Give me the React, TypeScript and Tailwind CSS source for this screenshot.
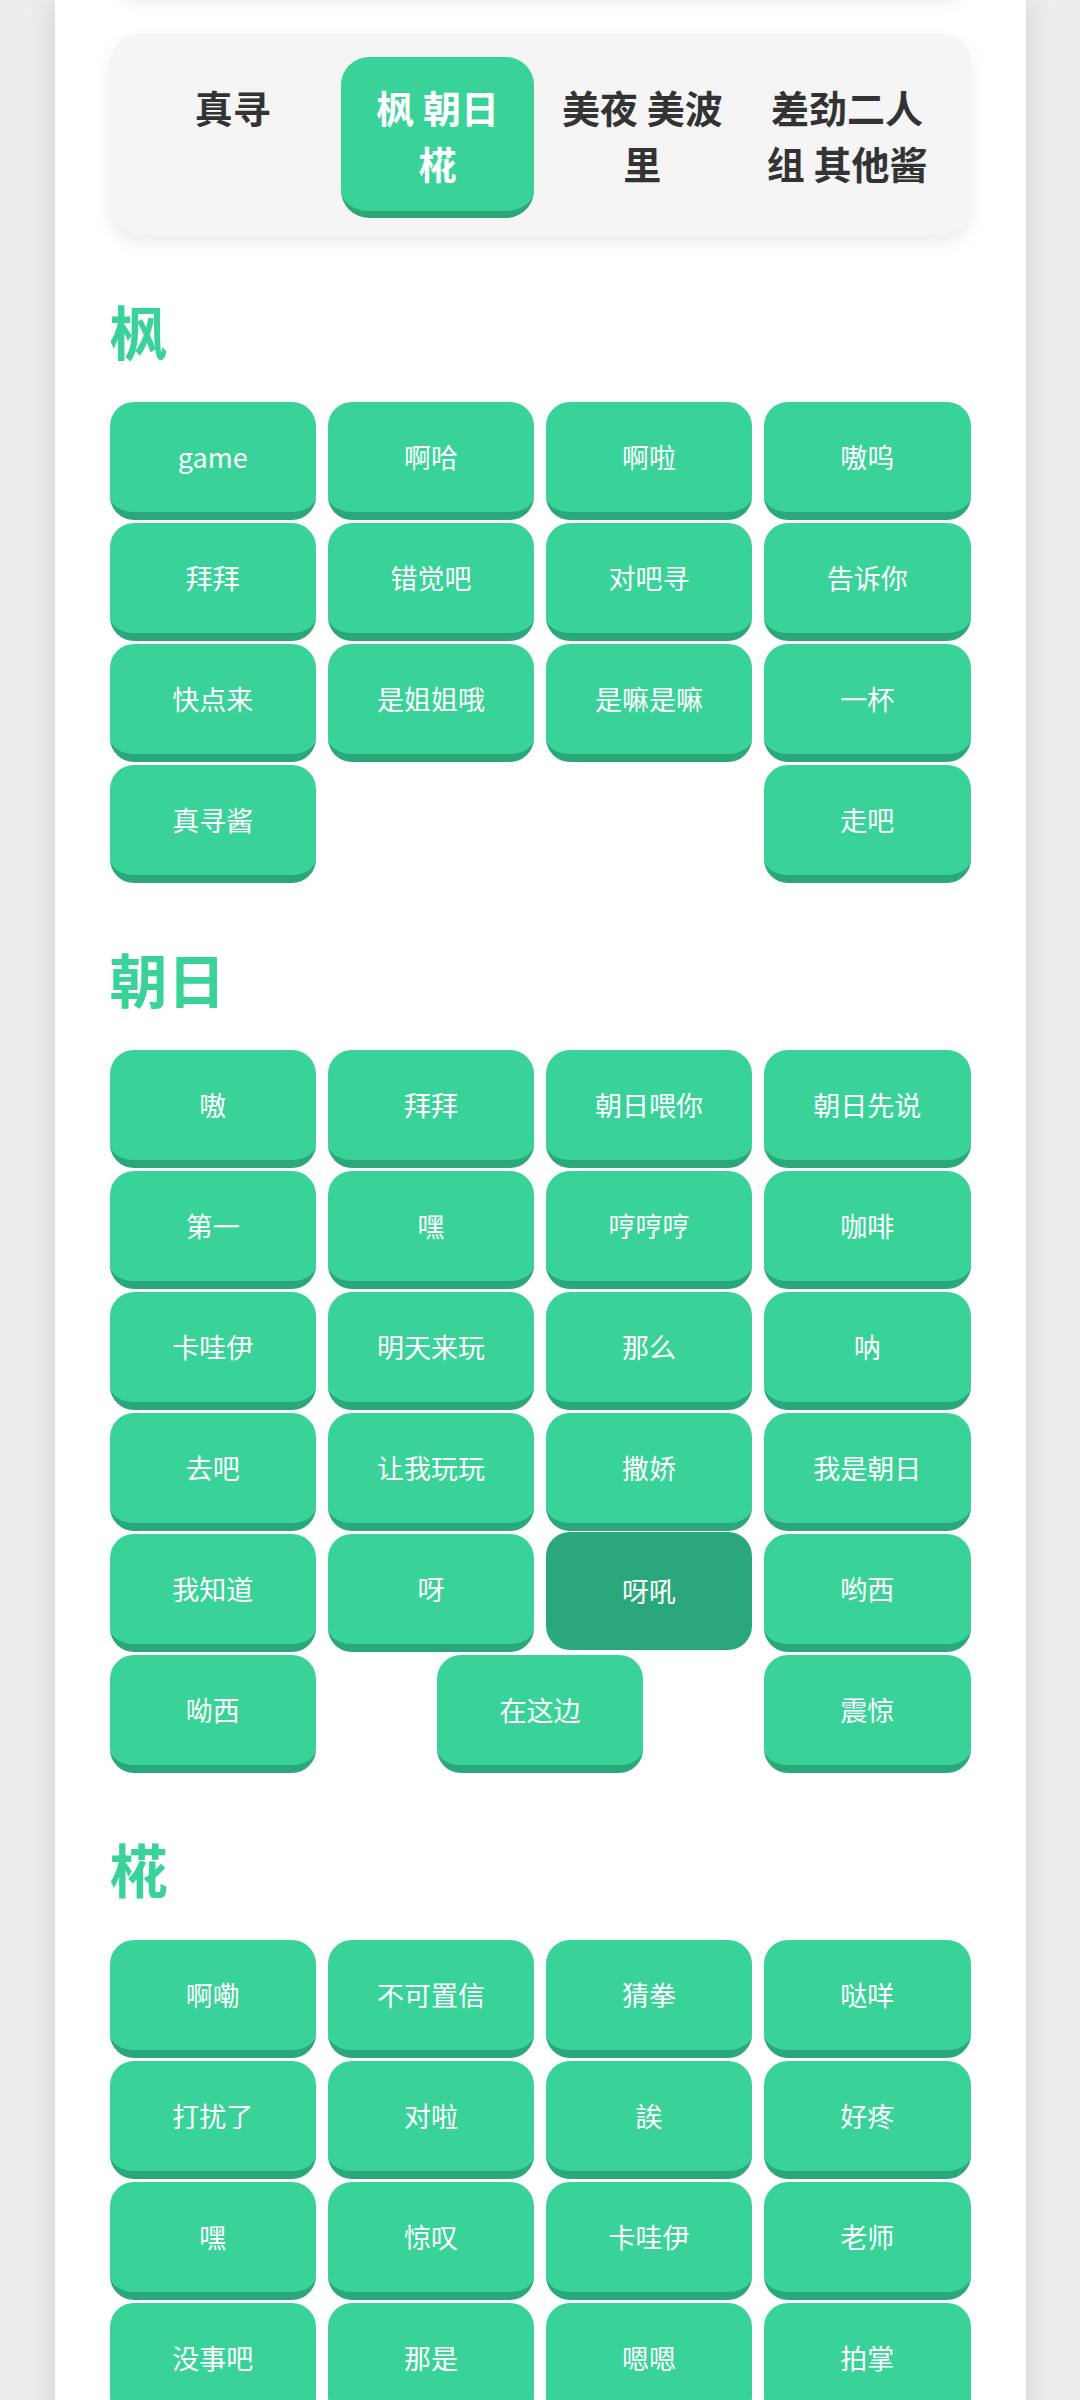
import React from 'react';

const tabs = ['真寻', '枫 朝日 椛', '美夜 美波里', '差劲二人组 其他酱'];

const sections: { title: string; items: string[] }[] = [
  {
    title: '枫',
    items: [
      'game', '啊哈', '啊啦', '嗷呜',
      '拜拜', '错觉吧', '对吧寻', '告诉你',
      '快点来', '是姐姐哦', '是嘛是嘛', '一杯',
      '真寻酱', '走吧',
    ],
  },
  {
    title: '朝日',
    items: [
      '嗷', '拜拜', '朝日喂你', '朝日先说',
      '第一', '嘿', '哼哼哼', '咖啡',
      '卡哇伊', '明天来玩', '那么', '呐',
      '去吧', '让我玩玩', '撒娇', '我是朝日',
      '我知道', '呀', '呀吼', '哟西',
      '呦西', '在这边', '震惊',
    ],
  },
  {
    title: '椛',
    items: [
      '啊嘞', '不可置信', '猜拳', '哒咩',
      '打扰了', '对啦', '誒', '好疼',
      '嘿', '惊叹', '卡哇伊', '老师',
      '没事吧', '那是', '嗯嗯', '拍掌',
    ],
  },
];

// 按下状态的按钮
const pressed = '呀吼';

const VoiceButton: React.FC<{ label: string; active?: boolean }> = ({ label, active }) =>
  active ? (
    <button className="w-[24%] h-[118px] -translate-y-[2px] rounded-[24px] bg-[#2ba87b] text-white text-[27px] flex items-center justify-center">
      {label}
    </button>
  ) : (
    <button className="w-[24%] h-[118px] rounded-[24px] bg-[#39d399] border-b-[8px] border-[#2ba87b] text-white text-[27px] flex items-center justify-center">
      {label}
    </button>
  );

export default function App() {
  return (
    <div className="min-h-screen bg-[#eceeec] flex justify-center font-['Noto_Sans_CJK_SC','Noto_Sans',sans-serif]">
      <div className="w-[971px] bg-white shadow-[0_0_28px_rgba(0,0,0,0.13)] px-[55px] pt-[34px] pb-[60px]">
        <div className="-mt-[100px] mb-[34px] h-[66px] rounded-[30px] bg-white shadow-[0_4px_14px_rgba(0,0,0,0.07)]" />

        <div className="grid grid-cols-4 gap-[12px] items-start rounded-[30px] bg-[#f4f5f4] shadow-[0_8px_18px_rgba(0,0,0,0.08)] px-[27px] pt-[23px] pb-[17px]">
          {tabs.map((t, i) =>
            i === 1 ? (
              <div
                key={t}
                className="rounded-[28px] bg-[#39d399] border-b-[7px] border-[#2ba87b] px-[14px] pt-[22px] pb-[20px] text-center text-[38px] leading-[56px] font-bold text-white"
              >
                {t}
              </div>
            ) : (
              <div
                key={t}
                className="px-[14px] pt-[22px] pb-[20px] text-center text-[38px] leading-[56px] font-bold text-[#333333]"
              >
                {t}
              </div>
            )
          )}
        </div>

        {sections.map((s) => (
          <section key={s.title} className="mt-[52px]">
            <h2 className="text-[58px] leading-[87px] font-bold text-[#39d399] mb-[28px]">{s.title}</h2>
            <div className="flex flex-wrap justify-between gap-y-[3px]">
              {s.items.map((it, i) => (
                <VoiceButton key={i} label={it} active={s.title === '朝日' && it === pressed} />
              ))}
            </div>
          </section>
        ))}
      </div>
    </div>
  );
}
